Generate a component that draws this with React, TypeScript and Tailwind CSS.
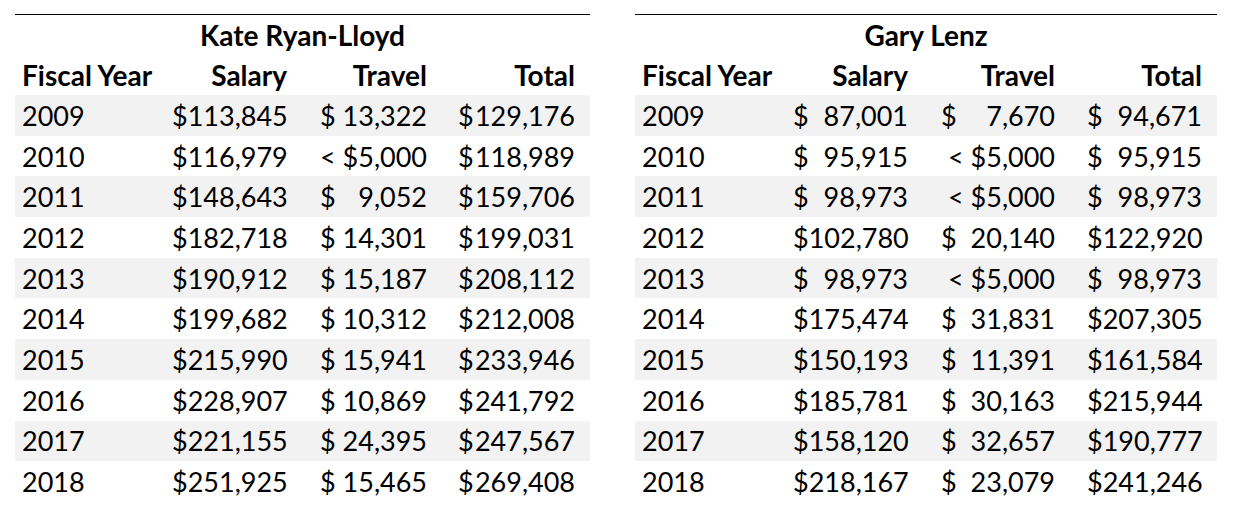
import React from "react"

type Row = { year: string; salary: string; travel: string; total: string }

const kate: Row[] = [
  { year: "2009", salary: "113,845", travel: "13,322", total: "129,176" },
  { year: "2010", salary: "116,979", travel: "<", total: "118,989" },
  { year: "2011", salary: "148,643", travel: "9,052", total: "159,706" },
  { year: "2012", salary: "182,718", travel: "14,301", total: "199,031" },
  { year: "2013", salary: "190,912", travel: "15,187", total: "208,112" },
  { year: "2014", salary: "199,682", travel: "10,312", total: "212,008" },
  { year: "2015", salary: "215,990", travel: "15,941", total: "233,946" },
  { year: "2016", salary: "228,907", travel: "10,869", total: "241,792" },
  { year: "2017", salary: "221,155", travel: "24,395", total: "247,567" },
  { year: "2018", salary: "251,925", travel: "15,465", total: "269,408" },
]

const gary: Row[] = [
  { year: "2009", salary: "87,001", travel: "7,670", total: "94,671" },
  { year: "2010", salary: "95,915", travel: "<", total: "95,915" },
  { year: "2011", salary: "98,973", travel: "<", total: "98,973" },
  { year: "2012", salary: "102,780", travel: "20,140", total: "122,920" },
  { year: "2013", salary: "98,973", travel: "<", total: "98,973" },
  { year: "2014", salary: "175,474", travel: "31,831", total: "207,305" },
  { year: "2015", salary: "150,193", travel: "11,391", total: "161,584" },
  { year: "2016", salary: "185,781", travel: "30,163", total: "215,944" },
  { year: "2017", salary: "158,120", travel: "32,657", total: "190,777" },
  { year: "2018", salary: "218,167", travel: "23,079", total: "241,246" },
]

// accounting style cell: "$" pinned left, amount pinned right
function Money({ value, pad }: { value: string; pad: string }) {
  if (value === "<") {
    return <div className="flex items-center justify-end pr-[15px]">&lt; $5,000</div>
  }
  return (
    <div className={`flex items-center justify-between pr-[15px] ${pad}`}>
      <span>$</span>
      <span>{value}</span>
    </div>
  )
}

function Table({
  name,
  rows,
  width,
  cols,
  pads,
}: {
  name: string
  rows: Row[]
  width: string
  cols: string
  pads: [string, string, string]
}) {
  return (
    <div className={`${width} border-t border-black`}>
      <div className="flex h-[40px] items-center justify-center text-[28px] font-bold">{name}</div>
      <div className={`grid h-[40px] items-center text-[28px] font-bold ${cols}`}>
        <div className="pl-[7px]">Fiscal Year</div>
        <div className="pr-[15px] text-right">Salary</div>
        <div className="pr-[15px] text-right">Travel</div>
        <div className="pr-[15px] text-right">Total</div>
      </div>
      {rows.map((r, i) => (
        <div
          key={r.year}
          className={`grid h-[40.7px] items-center ${cols} ${i % 2 === 0 ? "bg-[#f2f2f2]" : "bg-white"}`}
        >
          <div className="pl-[7px]">{r.year}</div>
          <Money value={r.salary} pad={pads[0]} />
          <Money value={r.travel} pad={pads[1]} />
          <Money value={r.total} pad={pads[2]} />
        </div>
      ))}
    </div>
  )
}

export default function App() {
  return (
    <div
      className="h-[512px] w-[1237px] overflow-hidden bg-white pl-[15px] pt-[14px] text-[27px] leading-none text-black tabular-nums"
      style={{ fontFamily: "Lato, 'Open Sans', sans-serif" }}
    >
      <div className="flex gap-[45px]">
        <Table
          name="Kate Ryan-Lloyd"
          rows={kate}
          width="w-[575px]"
          cols="grid-cols-[143px_144px_140px_148px]"
          pads={["pl-[14px]", "pl-[18px]", "pl-[16px]"]}
        />
        <Table
          name="Gary Lenz"
          rows={gary}
          width="w-[582px]"
          cols="grid-cols-[145px_143px_147px_147px]"
          pads={["pl-[13px]", "pl-[18px]", "pl-[17px]"]}
        />
      </div>
    </div>
  )
}
